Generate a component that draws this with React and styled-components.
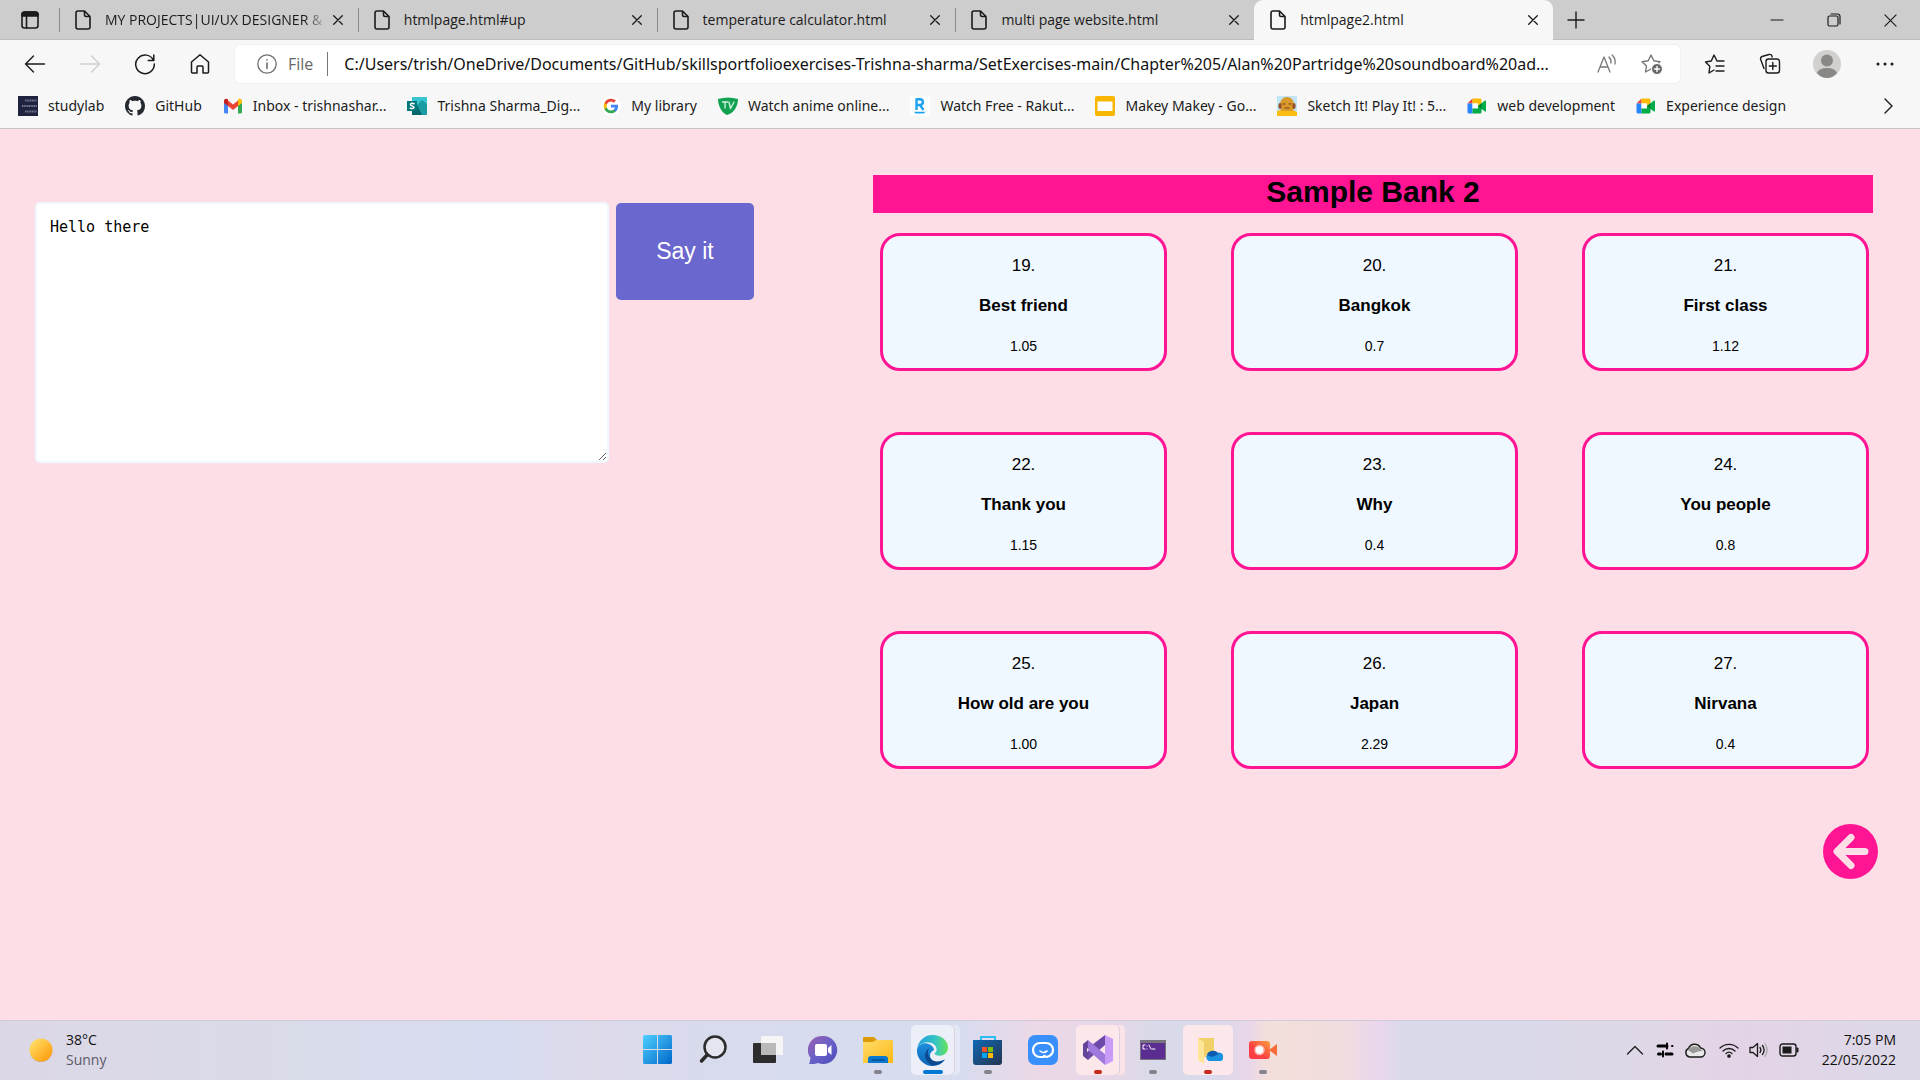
import React from "react";
import styled, { createGlobalStyle, css } from "styled-components";

const ui = `"Open Sans", "Noto Sans", sans-serif`;
const uiWide = `"Noto Sans", "Open Sans", sans-serif`;
const arial = `"Liberation Sans", Arial, sans-serif`;

const GlobalStyle = createGlobalStyle`
  * { box-sizing: border-box; }
  body { margin: 0; font-family: ${ui}; color: #111; }
  button, input, textarea { font: inherit; color: inherit; }
`;

const Screen = styled.div`
  display: flex;
  flex-direction: column;
  min-height: 100vh;
  background: #fddde6;
`;

const bareButton = css`
  display: flex;
  align-items: center;
  justify-content: center;
  padding: 0;
  border: 0;
  background: none;
`;

/* ---------- tab strip ---------- */
const TabStrip = styled.header`
  display: flex;
  align-items: stretch;
  height: 40px;
  background: #cdcdcd;
  box-shadow: inset 0 -1px 0 #bdbdbd;
`;
const TabActions = styled.button`
  ${bareButton}
  width: 59px;
`;
const Tabs = styled.nav`
  display: grid;
  grid-template-columns: repeat(5, 1fr);
  flex: 0 1 1494px;
  min-width: 0;
`;
const Tab = styled.div`
  display: flex;
  align-items: center;
  padding: 0 9px 0 16px;
  min-width: 0;
  background: ${(p) => (p.$active ? "#f7f7f7" : "none")};
  border-radius: 9px 9px 0 0;
  ${(p) =>
    !p.$active &&
    css`
      background: linear-gradient(#8a8a8a, #8a8a8a) 0 8px / 1px 24px no-repeat;
      border-radius: 0;
    `}
`;
const TabTitle = styled.a`
  flex: 1;
  min-width: 0;
  margin-left: 14px;
  overflow: hidden;
  white-space: nowrap;
  font-size: 14px;
  line-height: 20px;
  color: #1b1b1b;
  text-decoration: none;
  ${(p) => p.$fade && css`mask-image: linear-gradient(90deg, #000 90%, transparent);`}
`;
const TabClose = styled.button`
  ${bareButton}
  width: 22px;
  height: 22px;
`;
const NewTab = styled.button`
  ${bareButton}
  width: 46px;
`;
const WindowButtons = styled.div`
  display: flex;
  margin-left: auto;
  padding-right: 1px;
`;
const WindowButton = styled.button`
  ${bareButton}
  width: 57px;
`;

/* ---------- toolbar ---------- */
const Toolbar = styled.div`
  display: flex;
  align-items: center;
  height: 48px;
  padding: 0 8px 0 7px;
  background: #f7f7f7;
`;
const ToolButton = styled.button`
  ${bareButton}
  width: ${(p) => p.$w || 55}px;
  height: 40px;
`;
const AddressBar = styled.label`
  display: flex;
  flex: 1;
  align-items: center;
  height: 38px;
  margin: 0 7px 0 8px;
  padding: 0 7px 0 22px;
  border-radius: 5px;
  background: #fff;
  box-shadow: 0 0 2px rgba(0, 0, 0, 0.1);
`;
const Scheme = styled.span`
  margin-left: 11px;
  padding-right: 14px;
  border-right: 1px solid #777;
  font-size: 16px;
  line-height: 24px;
  color: #666;
`;
const Address = styled.input`
  flex: 1;
  min-width: 0;
  padding: 0;
  margin-left: 16px;
  border: 0;
  outline: 0;
  background: none;
  font-family: ${uiWide};
  font-size: 16px;
  line-height: 24px;
  text-overflow: ellipsis;
`;

/* ---------- bookmarks ---------- */
const Bookmarks = styled.nav`
  display: flex;
  align-items: center;
  height: 41px;
  padding: 0 20px 5px 18px;
  background: #f7f7f7;
  border-bottom: 1px solid #c4c4c4;
`;
const Bookmark = styled.a`
  display: flex;
  align-items: center;
  gap: 10px;
  margin-right: 21px;
  font-family: ${uiWide};
  font-size: 14px;
  line-height: 20px;
  color: #1b1b1b;
  white-space: nowrap;
  text-decoration: none;
`;
const More = styled.button`
  ${bareButton}
  margin-left: auto;
`;

/* ---------- page ---------- */
const Page = styled.main`
  display: grid;
  grid-template-columns: 1fr 1000px;
  flex: 1;
  padding: 46px 47px 0 35px;
  font-family: ${arial};
  color: #000;
`;
const Speech = styled.form`
  display: flex;
  align-items: flex-start;
  gap: 7px;
  padding-top: 27px;
`;
const SpeechText = styled.textarea`
  width: 574px;
  height: 261px;
  padding: 13px;
  border: 2px solid #f0f8ff;
  border-radius: 5px;
  outline: 0;
  background: #fff;
  font-family: "DejaVu Sans Mono", monospace;
  font-size: 15px;
  line-height: 20px;
`;
const SayButton = styled.button`
  width: 138px;
  height: 97px;
  margin-top: 1px;
  padding: 0;
  border: 0;
  border-radius: 5px;
  background: #6a67ce;
  color: #fff;
  font-family: ${arial};
  font-size: 23px;
`;
const BankTitle = styled.h1`
  margin: 0 0 20px;
  padding-bottom: 4px;
  background: #ff1493;
  font-size: 30px;
  line-height: 34px;
  text-align: center;
`;
const Bank = styled.div`
  display: grid;
  grid-template-columns: repeat(3, 1fr);
  gap: 61px 64px;
  padding: 0 4px 0 7px;
`;
const Sample = styled.button`
  display: flex;
  flex-direction: column;
  align-items: center;
  gap: 20px;
  padding: 20px 10px 12px;
  border: 3px solid #ff1493;
  border-radius: 20px;
  background: #f0f8ff;
  font-family: ${arial};
  font-size: 17px;
  line-height: 20px;
`;
const Length = styled.span`
  font-size: 14px;
`;
const BackRow = styled.div`
  display: flex;
  justify-content: flex-end;
  margin: 55px -5px 0 0;
`;
const BackLink = styled.a`
  display: flex;
`;

/* ---------- taskbar ---------- */
const Taskbar = styled.footer`
  display: grid;
  grid-template-columns: 1fr auto 1fr;
  align-items: center;
  height: 60px;
  padding-bottom: 1px;
  border-top: 1px solid #cfcbdc;
  background: linear-gradient(
    90deg,
    #dcd7e6 0%, #d9dbe9 15%, #d7dcf0 26%, #dddaea 31%, #d7dbed 38%, #d7dcef 50%,
    #ecd8e6 54%, #e6d7e7 58%, #d9dae9 60%, #d9daea 63%, #e8d6ea 65%, #f3dfda 66%, #f1dcde 70%,
    #e8d6ee 72%, #d9d9e9 73%, #d8d9ea 78%, #dfd7e6 86%, #e3d4e6 90%, #dcd8e8 100%
  );
`;
const Weather = styled.button`
  ${bareButton}
  justify-self: start;
  gap: 12px;
  padding-left: 28px;
  text-align: left;
  font-size: 14px;
  line-height: 20px;
`;
const Condition = styled.span`
  display: block;
  color: #5c5a66;
`;
const Apps = styled.div`
  display: flex;
`;
const AppButton = styled.button`
  ${bareButton}
  position: relative;
  width: 55px;
  height: 50px;
`;
const Plate = styled.span`
  display: flex;
  align-items: center;
  justify-content: center;
  width: ${(p) => (p.$tone === "alert" ? 50 : 43)}px;
  height: 50px;
  border-radius: 5px;
  ${(p) => p.$tone && css`background: ${p.$tone === "alert" ? "#fce8ea" : "#eceef8"};`}
  ${(p) => p.$stack && css`
    width: 43px;
    box-shadow: 1px 0 0 #d9cfdf, 6px 0 0 ${p.$tone === "alert" ? "#fbe3e8" : "#e4e8f4"};
  `}
`;
const Marker = styled.span`
  position: absolute;
  bottom: 1px;
  left: 50%;
  width: ${(p) => (p.$kind === "active" ? 20 : 8)}px;
  height: 4px;
  border-radius: 2px;
  transform: translateX(-50%);
  background: ${(p) => ({ active: "#0078d4", alert: "#c42b1c", open: "#84828b" })[p.$kind]};
`;
const Tray = styled.div`
  display: flex;
  align-items: center;
  justify-self: end;
  padding-right: 24px;
`;
const TrayButton = styled.button`
  ${bareButton}
  width: 30px;
  height: 40px;
`;
const TrayGroup = styled.div`
  display: flex;
  margin-left: 4px;
`;
const Clock = styled.time`
  margin-left: 18px;
  text-align: right;
  font-size: 14px;
  line-height: 20px;
`;
const ClockLine = styled.span`
  display: block;
`;

/* ---------- icons ---------- */
const Svg = ({ w = 20, h = w, box = `0 0 ${w} ${h}`, children, ...rest }) => (
  <svg width={w} height={h} viewBox={box} fill="none" stroke="#1b1b1b" strokeWidth="1.4" strokeLinecap="round" strokeLinejoin="round" aria-hidden="true" {...rest}>
    {children}
  </svg>
);
const FileIcon = () => (
  <Svg w={16} h={20} strokeWidth="1.6">
    <path d="M3 1h6.5L15 6.500V17a2 2 0 0 1-2 2H3a2 2 0 0 1-2-2V3a2 2 0 0 1 2-2zM9.500 1v4a1.500 1.500 0 0 0 1.500 1.500h4" />
  </Svg>
);
const CloseIcon = ({ s = 10 }) => (
  <Svg w={s} h={s} box="0 0 10 10" strokeWidth={s > 10 ? "0.900" : "1.300"}><path d="M.7.7l8.600 8.600M9.300.7L.7 9.300" /></Svg>
);
const StudyIcon = () => (
  <Svg stroke="none">
    <path fill="#20233f" d="M0 0h20v20H0z" />
    <path stroke="#74768f" strokeWidth="1.800" strokeLinecap="butt" strokeDasharray="1.200 .5" d="M7 4.500h11.500M4 10h15M7 15.500h11.500" />
  </Svg>
);
const GitHubIcon = () => (
  <Svg box="0 0 16 16" stroke="none">
    <path fill="#24292f" d="M8 0C3.580 0 0 3.580 0 8c0 3.540 2.290 6.530 5.470 7.590.4.070.55-.17.55-.38 0-.19-.01-.82-.01-1.490-2.010.37-2.530-.49-2.690-.94-.09-.23-.48-.94-.82-1.130-.28-.15-.68-.52-.01-.53.63-.01 1.080.58 1.230.82.72 1.210 1.870.87 2.330.66.07-.52.28-.87.51-1.070-1.780-.2-3.640-.89-3.640-3.950 0-.87.31-1.590.82-2.150-.08-.2-.36-1.020.08-2.120 0 0 .67-.21 2.200.82.64-.18 1.320-.27 2-.27s1.360.09 2 .27c1.530-1.040 2.200-.82 2.200-.82.44 1.100.16 1.920.08 2.120.51.56.82 1.270.82 2.150 0 3.070-1.870 3.750-3.650 3.950.29.25.54.73.54 1.480 0 1.070-.01 1.930-.01 2.200 0 .21.15.46.55.38A8.010 8.010 0 0 0 16 8c0-4.420-3.580-8-8-8z" />
  </Svg>
);
const GmailIcon = () => (
  <Svg stroke="none">
    <path fill="#4285f4" d="M1 5v11a1.500 1.500 0 0 0 1.500 1.500H5V8z" />
    <path fill="#34a853" d="M19 5v11a1.500 1.500 0 0 1-1.500 1.500H15V8z" />
    <path fill="#ea4335" d="M5 4.500l5 4 5-4V10l-5 4-5-4z" />
    <path fill="#c5221f" d="M1 5c0-2 2.200-2.800 3.600-1.700L5 3.600V10L1 7z" />
    <path fill="#fbbc04" d="M19 5c0-2-2.200-2.800-3.600-1.700L15 3.600V10l4-3z" />
  </Svg>
);
const SwayIcon = () => (
  <Svg stroke="none">
    <path fill="#1a9ba1" d="M5 1h14a1 1 0 0 1 1 1v16a1 1 0 0 1-1 1H5z" />
    <path fill="#37c6d0" d="M5 1h14a1 1 0 0 1 1 1v6l-5-4-5 5-5-4z" />
    <path fill="#05686d" d="M5 12l5-3 5 10H5z" />
    <path fill="#03787c" d="M0 5h10v10H0z" />
    <path stroke="#fff" strokeWidth="1.600" d="M7 7.700C5.800 7 3.500 7 3.500 8.600c0 1.600 3.400 1 3.400 2.700 0 1.400-2.400 1.500-3.600.8" />
  </Svg>
);
const GoogleIcon = () => (
  <Svg box="-3 -3 30 30" stroke="none">
    <circle cx="12" cy="12" r="15" fill="#fff" />
    <path fill="#4285f4" d="M22.560 12.250c0-.78-.07-1.530-.2-2.250H12v4.260h5.920a5.060 5.060 0 0 1-2.200 3.320v2.770h3.570c2.080-1.920 3.270-4.740 3.270-8.100z" />
    <path fill="#34a853" d="M12 23c2.970 0 5.460-.98 7.280-2.660l-3.570-2.770c-.98.66-2.230 1.060-3.710 1.060-2.860 0-5.290-1.930-6.160-4.530H2.180v2.840A11 11 0 0 0 12 23z" />
    <path fill="#fbbc05" d="M5.840 14.090a6.600 6.600 0 0 1 0-4.180V7.070H2.180a11 11 0 0 0 0 9.860z" />
    <path fill="#ea4335" d="M12 5.380c1.620 0 3.060.56 4.210 1.640l3.150-3.150A11 11 0 0 0 2.180 7.070l3.660 2.840C6.710 7.310 9.140 5.380 12 5.380z" />
  </Svg>
);
const AnimeIcon = () => (
  <Svg stroke="none">
    <path fill="#12a150" d="M0 3Q10 0 20 3C20 10 16 17 9 19 4 17 0 10 0 3z" />
    <path stroke="#d8f3e2" strokeWidth="1.300" d="M4.500 6h5M7 6v6M11 6l1.500 6.500L16 6" />
  </Svg>
);
const RakutenIcon = () => (
  <Svg stroke="none">
    <path fill="#fff" d="M0 0h20v20H0z" />
    <path stroke="#1ea1f1" strokeWidth="2.400" strokeLinecap="butt" d="M6.500 14V3.200H10a2.900 2.900 0 0 1 0 5.800H7M10 9l3.500 5" />
    <path fill="#1ea1f1" d="M4 15.800h12l-2.500 1.700H5.500z" />
  </Svg>
);
const SlidesIcon = () => (
  <Svg stroke="none">
    <rect width="20" height="20" rx="2" fill="#f9b600" />
    <rect x="2.500" y="5.500" width="15" height="9.500" fill="#fff" />
  </Svg>
);
const SketchIcon = () => (
  <Svg stroke="none">
    <path fill="#c3e6f7" d="M0 0h20v20H0z" />
    <path fill="#fbbc14" d="M0 20v-5l4-1h12l4 2v4z" />
    <path fill="#d99a2b" d="M3 9c0-5 3-8 7-8s7 3 7 8l-1 6H4z" />
    <ellipse cx="3" cy="10" rx="1.600" ry="3" fill="#96502a" /><ellipse cx="17" cy="10" rx="1.600" ry="3" fill="#96502a" />
    <path stroke="#703c1c" strokeWidth="1" d="M6 8h2M12 8h2M8 12h4" />
  </Svg>
);
const MeetIcon = () => (
  <Svg stroke="none">
    <path fill="#ea4335" d="M5.500 2.500v5H.5z" />
    <path fill="#fbbc04" d="M5.500 2.500H13A1.500 1.500 0 0 1 14.500 4v3L11 10V7.500H5.500z" />
    <path fill="#2684fc" d="M.5 7.500h5v10H2A1.500 1.500 0 0 1 .5 16z" />
    <path fill="#fff" d="M5.500 7.500H11v5H5.500z" />
    <path fill="#00ac47" d="M5.500 17.500v-5H11V10l7-5.500c.4-.3 1 0 1 .5v10c0 .5-.6.800-1 .5L14.500 13V16a1.500 1.500 0 0 1-1.500 1.500z" />
    <path fill="#00832d" d="M11 10l3.500-3v6z" />
  </Svg>
);

const tabs = [
  { title: "MY PROJECTS|UI/UX DESIGNER &", fade: true },
  { title: "htmlpage.html#up" },
  { title: "temperature calculator.html" },
  { title: "multi page website.html" },
  { title: "htmlpage2.html", active: true },
];
const bookmarks = [
  [StudyIcon, "studylab"],
  [GitHubIcon, "GitHub"],
  [GmailIcon, "Inbox - trishnashar..."],
  [SwayIcon, "Trishna Sharma_Dig..."],
  [GoogleIcon, "My library"],
  [AnimeIcon, "Watch anime online..."],
  [RakutenIcon, "Watch Free - Rakut..."],
  [SlidesIcon, "Makey Makey - Go..."],
  [SketchIcon, "Sketch It! Play It! : 5..."],
  [MeetIcon, "web development"],
  [MeetIcon, "Experience design"],
];
const samples = [
  ["Best friend", "1.05"], ["Bangkok", "0.7"], ["First class", "1.12"],
  ["Thank you", "1.15"], ["Why", "0.4"], ["You people", "0.8"],
  ["How old are you", "1.00"], ["Japan", "2.29"], ["Nirvana", "0.4"],
];

const apps = [
  { name: "Start", icon: (
    <Svg w={30} stroke="none">
      <defs><linearGradient id="win" x1="0" y1="0" x2="1" y2="1" ><stop stopColor="#4fd0ff" /><stop offset="1" stopColor="#0067c8" /></linearGradient></defs>
      <path fill="url(#win)" d="M1.500 0H14v14H0V1.500A1.500 1.500 0 0 1 1.500 0zM15 0h12.500A1.500 1.500 0 0 1 29 1.500V14H15zM0 15h14v14H1.500A1.500 1.500 0 0 1 0 27.500zM15 15h14v12.500a1.500 1.500 0 0 1-1.500 1.500H15z" />
    </Svg>) },
  { name: "Search", icon: (
    <Svg w={30} stroke="#2b2b2b"><circle cx="17" cy="12" r="10.500" strokeWidth="2.500" fill="#e4e5ef" /><path strokeWidth="3.500" d="M9 20l-5.500 6" /></Svg>) },
  { name: "Task view", icon: (
    <Svg w={30} stroke="none"><rect y="8" width="23" height="20" rx="1" fill="#2d2d2d" /><rect x="8" y="1" width="22" height="19" rx="1" fill="#f5f5f5" /><path fill="#b9b9b9" d="M8 8h15v12H8z" /></Svg>) },
  { name: "Chat", icon: (
    <Svg w={30} stroke="none">
      <defs><linearGradient id="chat" x1="0" y1="0" x2="1" y2="1"><stop stopColor="#9b5fb0" /><stop offset=".5" stopColor="#6a62c8" /><stop offset="1" stopColor="#4a4ab8" /></linearGradient></defs>
      <path fill="url(#chat)" d="M15 1a14 14 0 1 1-5 27c-2 1-6 1-9 1 1-2 1-4 1.500-6A14 14 0 0 1 15 1z" /><rect x="7" y="9" width="12" height="12" rx="2" fill="#fff" /><path fill="#fff" d="M20 13l3.500-3v10L20 17z" />
    </Svg>) },
  { name: "File Explorer", mark: "open", icon: (
    <Svg w={30} stroke="none">
      <defs><linearGradient id="folder" x1="0" y1="0" x2="1" y2="1"><stop stopColor="#ffdc6b" /><stop offset="1" stopColor="#fdb813" /></linearGradient></defs>
      <path fill="#dc9a06" d="M0 3a1 1 0 0 1 1-1h10l3 3v4H0z" /><path fill="url(#folder)" d="M0 7h10l3-2h16a1 1 0 0 1 1 1v22H0z" /><path fill="#0a78cf" d="M5 28v-4a3 3 0 0 1 3-3h14a3 3 0 0 1 3 3v4z" /><path stroke="#074f91" strokeWidth="1.500" d="M9 25h12" />
    </Svg>) },
  { name: "Microsoft Edge", mark: "active", tone: "active", stack: true, icon: (
    <Svg w={31} box="0 0 30 30" stroke="none">
      <defs>
        <linearGradient id="edgeA" x1="0" y1="0" x2="1" y2="0"><stop stopColor="#1f9bdc" /><stop offset=".6" stopColor="#35c5c4" /><stop offset="1" stopColor="#66e357" /></linearGradient>
        <linearGradient id="edgeB" x1="0" y1="0" x2="0" y2="1"><stop stopColor="#1b8fdc" /><stop offset="1" stopColor="#0f65b8" /></linearGradient>
      </defs>
      <path fill="url(#edgeB)" d="M0 14C2 8 8 7 12 9c4 2 5 5 4 6-3 1-4 4-3 7 2 5 9 5 14 2-3 4-7 6-12 6A15 15 0 0 1 0 14z" />
      <path fill="url(#edgeA)" d="M0 14C1 6 7 0 15 0c9 0 15 6 15 12 0 5-4 8-8 8-3 0-5-1-5-2 0-1 2-1 2-4 0-4-4-7-9-7-5 0-9 3-10 7z" />
      <path fill="#0b4a8f" d="M12 12.500c-2 2-2 6 0 9 3 5 10 5 15 2-2 3-6 6-12 6-5-2-8-7-7-11 .5-3 2-5 4-6z" />
    </Svg>) },
  { name: "Microsoft Store", mark: "open", icon: (
    <Svg w={30} stroke="none">
      <defs><linearGradient id="store" x1="0" y1="0" x2="1" y2="1"><stop stopColor="#0f68b5" /><stop offset="1" stopColor="#253450" /></linearGradient></defs>
      <path stroke="#2dbcf2" strokeWidth="2" d="M8 6V2h14v4" /><path fill="url(#store)" d="M0 5h29v22a3 3 0 0 1-3 3H3a3 3 0 0 1-3-3z" />
      <path fill="#f35325" d="M9 12h5v5H9z" /><path fill="#81bc06" d="M15 12h5v5h-5z" /><path fill="#05a6f0" d="M9 18h5v5H9z" /><path fill="#ffba08" d="M15 18h5v5h-5z" />
    </Svg>) },
  { name: "Assistant", icon: (
    <Svg w={30} stroke="#fff"><rect width="30" height="30" rx="7" fill="#3a90fb" stroke="none" /><path strokeWidth="2.200" d="M16 22h-4c-4 0-7-3-7-7s3-7 7-7h6c4 0 7 3 7 7s-3 6-6 7l-3-1" /><path strokeWidth="1.600" d="M12 16q3 3 7 0" /></Svg>) },
  { name: "Visual Studio", mark: "alert", tone: "alert", stack: true, icon: (
    <Svg w={30} stroke="none">
      <path fill="#63459c" d="M0 9l5-4v8l-1 2 1 2v8l-5-4z" />
      <path fill="#6d4aa8" d="M5 13L22 0v10L5 25z" />
      <path fill="#a179dc" d="M5 5l17 14v11L5 15z" />
      <path fill="#c79bf7" d="M22 0l8 4v22l-8 4z" />
      <path fill="#fce8ea" d="M22 11v8l-5-4zM4 13l2 2-2 2z" />
    </Svg>) },
  { name: "Command Prompt", mark: "open", icon: (
    <Svg w={26} h={20} stroke="none"><rect width="26" height="20" fill="#77747e" /><path fill="#5c2d91" d="M1 3h24v16H1z" /><path stroke="#fff" strokeWidth="1" d="M5 5H3v4h2M7 6v.100M7 9v.100M9 5l2 4M12 9h3" /></Svg>) },
  { name: "OneDrive folder", mark: "alert", tone: "alert", icon: (
    <Svg w={30} stroke="none"><path fill="#f1d06a" d="M5 3h16v19H5z" /><path fill="#ffe596" d="M5 3l6 4v22l-6-4z" /><path fill="#1793e0" d="M16 26a4 4 0 0 1-1-7 6 6 0 0 1 9-1 4 4 0 0 1 4 8z" /><path fill="#0b5cb0" d="M14 20a6 5 0 0 1 10-3l2 2-7 3z" /></Svg>) },
  { name: "Screen recorder", mark: "open", icon: (
    <Svg w={30} stroke="none">
      <defs><linearGradient id="rec" x1="0" y1="1" x2="1" y2="0"><stop offset=".4" stopColor="#fb3f42" /><stop offset="1" stopColor="#fda03c" /></linearGradient></defs>
      <path fill="#f86a38" d="M21 15l8-6v12z" /><rect x="1" y="6" width="21" height="18" rx="3" fill="url(#rec)" /><circle cx="11.500" cy="15" r="4.500" fill="#fff" stroke="#ffb3a8" strokeWidth="1.600" />
    </Svg>) },
];

const tray = [
  ["Show hidden icons", <Svg w={18} h={10} stroke="#222"><path d="M1.500 9L9 1.500 16.500 9" /></Svg>],
  ["Input settings", <Svg w={18} h={16} stroke="#000" strokeWidth="3"><path d="M2 4h9M2.500 12h2M10 12h6" /><path strokeWidth="2" d="M11 1.500v5M16 4h.5M7 9.500v5" /></Svg>],
  ["OneDrive", <Svg w={22} h={15} stroke="#1b1b1b"><path fill="#e9e9e9" d="M5.500 14a4.500 4.500 0 0 1-1-8.500 6.500 6.500 0 0 1 12-.5 4.500 4.500 0 0 1 0 9z" /><path fill="#999" stroke="none" d="M4 7a7 6 0 0 1 12-1.500l3 2-5 1-5 2z" /></Svg>],
];

export default function App() {
  return (
    <Screen>
      <GlobalStyle />
      <TabStrip>
        <TabActions aria-label="Tab actions">
          <Svg w={18} strokeWidth="1.600"><rect x="1" y="1" width="16" height="16" rx="2.500" /><path fill="#1b1b1b" d="M1 5V3.500A2.500 2.500 0 0 1 3.500 1h11A2.500 2.500 0 0 1 17 3.500V5zM5.500 5v12" /></Svg>
        </TabActions>
        <Tabs aria-label="Tabs">
          {tabs.map((t) => (
            <Tab key={t.title} $active={t.active}>
              <FileIcon />
              <TabTitle href="#" $fade={t.fade}>{t.title}</TabTitle>
              <TabClose aria-label={`Close ${t.title}`}><CloseIcon /></TabClose>
            </Tab>
          ))}
        </Tabs>
        <NewTab aria-label="New tab"><Svg w={18}><path d="M9 1v16M1 9h16" /></Svg></NewTab>
        <WindowButtons>
          <WindowButton aria-label="Minimize"><Svg w={14} h={14} strokeWidth="1.200"><path d="M1 7h12" /></Svg></WindowButton>
          <WindowButton aria-label="Restore"><Svg w={14} h={14} strokeWidth="1.200"><rect x="1" y="3" width="10" height="10" rx="1.500" /><path d="M4 1h6.500A2.500 2.500 0 0 1 13 3.500V11" /></Svg></WindowButton>
          <WindowButton aria-label="Close"><CloseIcon s={13} /></WindowButton>
        </WindowButtons>
      </TabStrip>

      <Toolbar>
        <ToolButton aria-label="Back"><Svg w={22}><path d="M20.500 11H1.500M9.500 3L1.500 11l8 8" /></Svg></ToolButton>
        <ToolButton aria-label="Forward"><Svg w={22} stroke="#cfcfcf"><path d="M1.500 11h19M12.500 3l8 8-8 8" /></Svg></ToolButton>
        <ToolButton aria-label="Refresh"><Svg w={22} strokeWidth="1.500"><path d="M19.500 7.500A9.300 9.300 0 1 0 20.300 11M19.800 2v5.500h-5.500" /></Svg></ToolButton>
        <ToolButton aria-label="Home"><Svg w={22} strokeWidth="1.500"><path d="M2.500 9L11 1.800 19.500 9v10a1 1 0 0 1-1 1H14v-6a1 1 0 0 0-1-1H9a1 1 0 0 0-1 1v6H3.500a1 1 0 0 1-1-1z" /></Svg></ToolButton>
        <AddressBar>
          <Svg w={20} stroke="#707070" strokeWidth="1.300"><circle cx="10" cy="10" r="9.200" /><path d="M10 9v5.500M10 5.800v.2" strokeWidth="1.600" /></Svg>
          <Scheme>File</Scheme>
          <Address aria-label="Address" readOnly value="C:/Users/trish/OneDrive/Documents/GitHub/skillsportfolioexercises-Trishna-sharma/SetExercises-main/Chapter%205/Alan%20Partridge%20soundboard%20ad..." />
          <ToolButton $w={44} aria-label="Read aloud"><Svg w={22} h={20} stroke="#777" strokeWidth="1.300"><path d="M2 18L8 3l6 15M4 13h8M13 3q2.500 2.500 2 6M16 1q4 3.500 3 9" /></Svg></ToolButton>
          <ToolButton $w={44} aria-label="Add to favorites"><Svg w={23} h={22} stroke="#777"><path d="M11 2l2.800 5.800 6.200.9-4.500 4.300 1 6-5.500-3-5.500 3 1-6L2 8.700l6.200-.9z" /><circle cx="17" cy="16" r="5.500" fill="#666" stroke="#fff" strokeWidth="1" /><path stroke="#fff" d="M17 13.500v5M14.500 16h5" /></Svg></ToolButton>
        </AddressBar>
        <ToolButton aria-label="Favorites"><Svg w={22}><path d="M13 8L10 2 7.300 8 1.500 9l4.300 4.300L5 20l5-3M13 8h7M12 13h8M12 18h8" /></Svg></ToolButton>
        <ToolButton aria-label="Collections"><Svg w={22}><path d="M5 15.500L1.500 6A2.500 2.500 0 0 1 3 3.500L10 1.500A2.500 2.500 0 0 1 13 3v1" /><rect x="7" y="6" width="13.500" height="14" rx="2.500" /><path d="M13.800 9.500v7M10.300 13h7" /></Svg></ToolButton>
        <ToolButton $w={60} aria-label="Profile"><Svg w={28} stroke="none"><circle cx="14" cy="14" r="14" fill="#d2d0ce" /><circle cx="14" cy="10.500" r="6" fill="#8a8886" /><path fill="#8a8886" d="M4 23q2-5 10-5t10 5q-4 5-10 5T4 23z" /></Svg></ToolButton>
        <ToolButton aria-label="Menu"><Svg w={18} h={4} stroke="none"><path stroke="#1b1b1b" strokeWidth="3" d="M2 2h.010M9 2h.010M16 2h.010" /></Svg></ToolButton>
      </Toolbar>

      <Bookmarks aria-label="Favorites bar">
        {bookmarks.map(([Icon, label]) => (
          <Bookmark key={label} href="#"><Icon />{label}</Bookmark>
        ))}
        <More aria-label="More favorites"><Svg w={24} h={16}><path d="M9 1l7 7-7 7" /></Svg></More>
      </Bookmarks>

      <Page>
        <Speech onSubmit={(e) => e.preventDefault()}>
          <SpeechText aria-label="Text to say" defaultValue="Hello there" />
          <SayButton type="submit">Say it</SayButton>
        </Speech>
        <section>
          <BankTitle>Sample Bank 2</BankTitle>
          <Bank>
            {samples.map(([name, length], i) => (
              <Sample key={name}>
                <span>{i + 19}.</span>
                <strong>{name}</strong>
                <Length>{length}</Length>
              </Sample>
            ))}
          </Bank>
          <BackRow>
            <BackLink href="#" aria-label="Previous bank">
              <Svg w={55} stroke="#fddde6" strokeWidth="7"><circle cx="27.500" cy="27.500" r="27.500" fill="#ff1493" stroke="none" /><path d="M28 13.500l-14 14 14 14M15 27.500h27" /></Svg>
            </BackLink>
          </BackRow>
        </section>
      </Page>

      <Taskbar>
        <Weather>
          <Svg w={26} stroke="none">
            <defs><linearGradient id="sun" x1="0" y1="0" x2="1" y2="1"><stop stopColor="#ffe873" /><stop offset="1" stopColor="#ff9300" /></linearGradient></defs>
            <circle cx="13" cy="14" r="11" fill="#a9a4ae" /><circle cx="13" cy="13" r="11.500" fill="url(#sun)" />
          </Svg>
          <span>38°C<Condition>Sunny</Condition></span>
        </Weather>
        <Apps>
          {apps.map((a) => (
            <AppButton key={a.name} aria-label={a.name}>
              <Plate $tone={a.tone} $stack={a.stack}>{a.icon}</Plate>
              {a.mark && <Marker $kind={a.mark} />}
            </AppButton>
          ))}
        </Apps>
        <Tray>
          {tray.map(([name, icon]) => <TrayButton key={name} aria-label={name}>{icon}</TrayButton>)}
          <TrayGroup>
            <TrayButton aria-label="Network"><Svg w={20} h={16} strokeWidth="1.300"><path d="M1 6a13 13 0 0 1 18 0M4 9a8.500 8.500 0 0 1 12 0M7 11.500a4.500 4.500 0 0 1 6 0" /><circle cx="10" cy="14" r="1.200" fill="#1b1b1b" /></Svg></TrayButton>
            <TrayButton aria-label="Volume"><Svg w={20} h={16} strokeWidth="1.300"><path d="M1 5.500h3L8.500 1.500v13L4 10.500H1zM11 5.500q1.800 2.500 0 5M13.500 3.500q3.200 4.500 0 9" /><path stroke="#aaa" d="M16 1.500q4 6.500 0 13" /></Svg></TrayButton>
            <TrayButton aria-label="Battery"><Svg w={20} h={14}><rect x="1" y="1" width="16" height="12" rx="2.500" /><rect x="3.500" y="3.500" width="9" height="7" fill="#1b1b1b" stroke="none" /><path strokeWidth="2" d="M18.500 5.500v3" /></Svg></TrayButton>
          </TrayGroup>
          <Clock><ClockLine>7:05 PM</ClockLine><ClockLine>22/05/2022</ClockLine></Clock>
        </Tray>
      </Taskbar>
    </Screen>
  );
}
